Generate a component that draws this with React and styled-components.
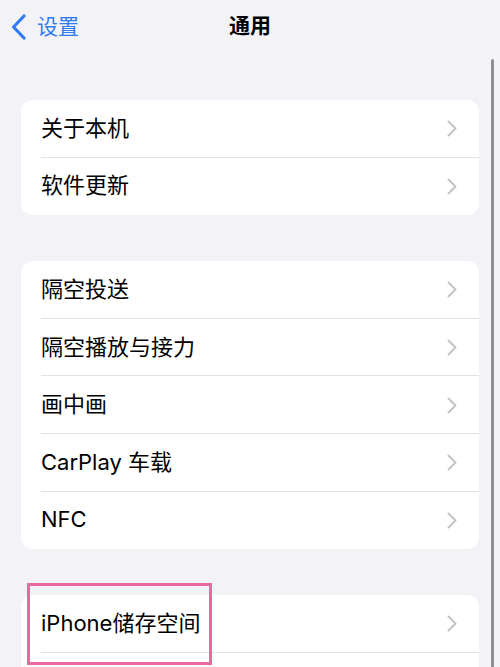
import styled, { createGlobalStyle } from 'styled-components';

const GlobalStyle = createGlobalStyle`
  html, body {
    margin: 0;
    padding: 0;
    background: #f2f2f7;
    overflow: hidden;
  }
  body {
    font-family: Inter, "Noto Sans CJK SC", "Noto Sans", sans-serif;
    -webkit-font-smoothing: antialiased;
  }
`;

const Page = styled.div`
  position: relative;
  width: 500px;
  height: 667px;
  overflow: hidden;
  background: #f2f2f7;
`;

const NavBar = styled.div`
  position: relative;
  height: 54px;
  display: flex;
  align-items: flex-start;
  justify-content: center;
`;

const BackButton = styled.div`
  position: absolute;
  left: 11px;
  top: 13px;
  display: flex;
  align-items: center;
  gap: 10px;
  color: #2f7cf2;
  font-size: 21px;
  line-height: 28px;
`;

const Title = styled.div`
  font-size: 21px;
  line-height: 28px;
  font-weight: 700;
  color: #000;
  margin-top: 12px;
`;

const Content = styled.div`
  padding: 46px 21px 0;
  display: flex;
  flex-direction: column;
  gap: 46px;
`;

const Card = styled.div`
  background: #fff;
  border-radius: 12px;
  overflow: hidden;
`;

const Row = styled.div`
  height: 57.6px;
  display: flex;
  align-items: center;
  padding-left: 20px;
  position: relative;
  &:not(:last-child)::after {
    content: '';
    position: absolute;
    left: 20px;
    right: 0;
    bottom: 0;
    height: 1px;
    background: #e3e3e6;
  }
`;

const Label = styled.span`
  flex: 1;
  font-size: 22px;
  line-height: 28px;
  margin-top: -2px;
  color: #000;
`;

const Chevron = styled.svg`
  width: 10px;
  height: 17px;
  margin-right: 22px;
  flex-shrink: 0;
`;

const ScrollBar = styled.div`
  position: absolute;
  right: 6px;
  top: 59px;
  width: 3px;
  bottom: -10px;
  border-radius: 2px;
  background: #8f8f94;
`;

const Highlight = styled.div`
  position: absolute;
  left: 27px;
  top: 583px;
  width: 185px;
  height: 82px;
  box-sizing: border-box;
  border: 3px solid #ea67a0;
  pointer-events: none;
`;

const groups = [
  ['关于本机', '软件更新'],
  ['隔空投送', '隔空播放与接力', '画中画', 'CarPlay 车载', 'NFC'],
  ['iPhone储存空间', ''],
];

const RowChevron = () => (
  <Chevron viewBox="0 0 10 17">
    <path
      d="M1.5 1.5 L8.5 8.5 L1.5 15.5"
      fill="none"
      stroke="#c4c4c7"
      strokeWidth="2"
      strokeLinecap="round"
      strokeLinejoin="round"
    />
  </Chevron>
);

const App = () => {
  return (
    <>
      <GlobalStyle />
      <Page>
        <NavBar>
          <BackButton>
            <svg width="16" height="26" viewBox="0 0 16 26">
              <path
                d="M13 2 L2.5 13 L13 24"
                fill="none"
                stroke="#2f7cf2"
                strokeWidth="3.2"
                strokeLinecap="round"
                strokeLinejoin="round"
              />
            </svg>
            <span>设置</span>
          </BackButton>
          <Title>通用</Title>
        </NavBar>
        <Content>
          {groups.map((items, i) => (
            <Card key={i}>
              {items.map((item, j) => (
                <Row key={j}>
                  <Label>{item}</Label>
                  <RowChevron />
                </Row>
              ))}
            </Card>
          ))}
        </Content>
        <ScrollBar />
        <Highlight />
      </Page>
    </>
  );
};

export default App;
